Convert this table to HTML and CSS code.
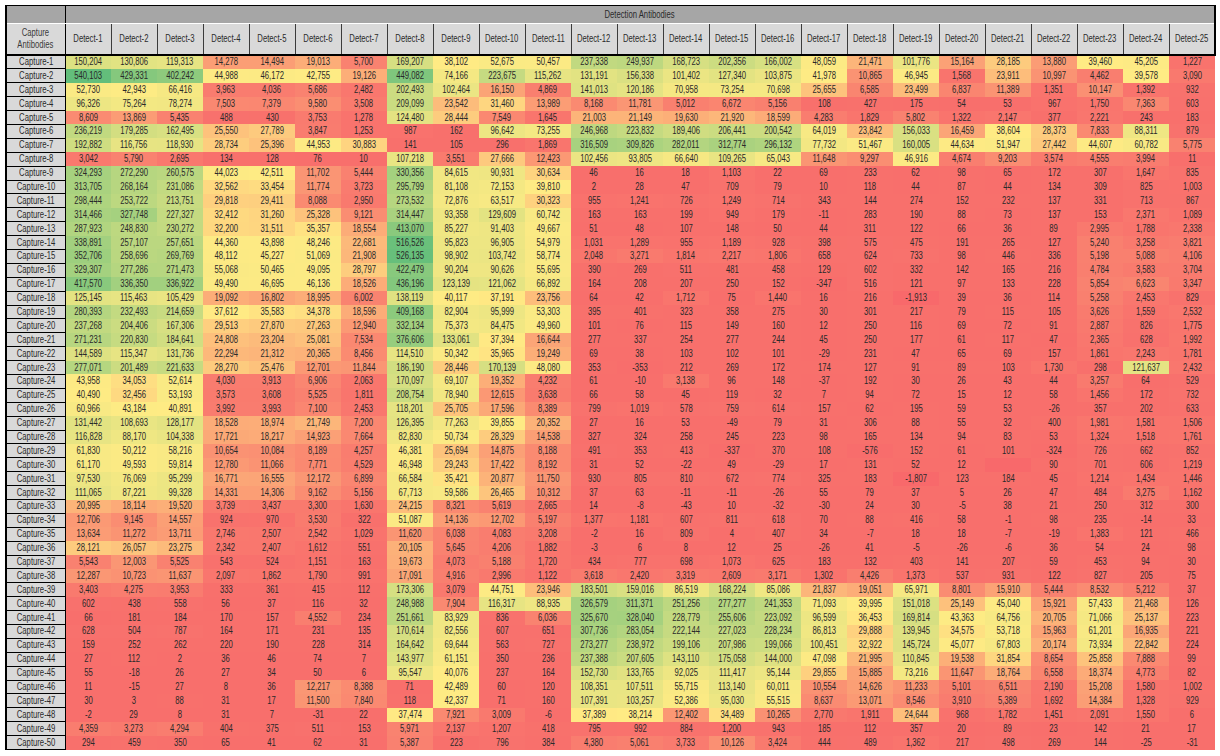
FILE: index.html
```html
<!DOCTYPE html>
<html lang="en">
<head>
<meta charset="utf-8">
<title>Capture / Detection Antibody Matrix</title>
<link rel="stylesheet" href="styles.css">
</head>
<body>
<div class="sheet">
<table class="grid">
<colgroup><col class="c-label"><col class="c-data" span="25"></colgroup>
<thead>
<tr class="band"><th class="corner"></th><th class="band-title" colspan="25">Detection Antibodies</th></tr>
<tr class="heads"><th class="label-head">Capture<br>Antibodies</th><th>Detect-1</th><th>Detect-2</th><th>Detect-3</th><th>Detect-4</th><th>Detect-5</th><th>Detect-6</th><th>Detect-7</th><th>Detect-8</th><th>Detect-9</th><th>Detect-10</th><th>Detect-11</th><th>Detect-12</th><th>Detect-13</th><th>Detect-14</th><th>Detect-15</th><th>Detect-16</th><th>Detect-17</th><th>Detect-18</th><th>Detect-19</th><th>Detect-20</th><th>Detect-21</th><th>Detect-22</th><th>Detect-23</th><th>Detect-24</th><th>Detect-25</th></tr>
</thead>
<tbody>
<tr><th>Capture-1</th><td>150,204</td><td>130,806</td><td>119,313</td><td>14,278</td><td>14,494</td><td>19,013</td><td>5,700</td><td>169,207</td><td>38,102</td><td>52,675</td><td>50,457</td><td>237,338</td><td>249,937</td><td>168,723</td><td>202,356</td><td>166,002</td><td>48,059</td><td>21,471</td><td>101,776</td><td>15,164</td><td>28,185</td><td>13,880</td><td>39,460</td><td>45,205</td><td>1,227</td></tr>
<tr><th>Capture-2</th><td>540,103</td><td>429,331</td><td>402,242</td><td>44,988</td><td>46,172</td><td>42,755</td><td>19,126</td><td>449,082</td><td>74,166</td><td>223,675</td><td>115,262</td><td>131,191</td><td>156,338</td><td>101,402</td><td>127,340</td><td>103,875</td><td>41,978</td><td>10,865</td><td>46,945</td><td>1,568</td><td>23,911</td><td>10,997</td><td>4,462</td><td>39,578</td><td>3,090</td></tr>
<tr><th>Capture-3</th><td>52,730</td><td>42,943</td><td>66,416</td><td>3,963</td><td>4,036</td><td>5,686</td><td>2,482</td><td>202,493</td><td>102,464</td><td>16,150</td><td>4,869</td><td>141,013</td><td>120,186</td><td>70,958</td><td>73,254</td><td>70,698</td><td>25,655</td><td>6,585</td><td>23,499</td><td>6,837</td><td>11,389</td><td>1,351</td><td>10,147</td><td>1,392</td><td>932</td></tr>
<tr><th>Capture-4</th><td>96,326</td><td>75,264</td><td>78,274</td><td>7,503</td><td>7,379</td><td>9,580</td><td>3,508</td><td>209,099</td><td>23,542</td><td>31,460</td><td>13,989</td><td>8,168</td><td>11,781</td><td>5,012</td><td>6,672</td><td>5,156</td><td>108</td><td>427</td><td>175</td><td>54</td><td>53</td><td>967</td><td>1,750</td><td>7,363</td><td>603</td></tr>
<tr><th>Capture-5</th><td>8,609</td><td>13,869</td><td>5,435</td><td>488</td><td>430</td><td>3,753</td><td>1,278</td><td>124,480</td><td>28,444</td><td>7,549</td><td>1,645</td><td>21,003</td><td>21,149</td><td>19,630</td><td>21,920</td><td>18,599</td><td>4,283</td><td>1,829</td><td>5,802</td><td>1,322</td><td>2,147</td><td>377</td><td>2,221</td><td>243</td><td>183</td></tr>
<tr><th>Capture-6</th><td>236,219</td><td>179,285</td><td>162,495</td><td>25,550</td><td>27,789</td><td>3,847</td><td>1,253</td><td>987</td><td>162</td><td>96,642</td><td>73,255</td><td>246,968</td><td>223,832</td><td>189,406</td><td>206,441</td><td>200,542</td><td>64,019</td><td>23,842</td><td>156,033</td><td>16,459</td><td>38,604</td><td>28,373</td><td>7,833</td><td>88,311</td><td>879</td></tr>
<tr><th>Capture-7</th><td>192,882</td><td>116,756</td><td>118,930</td><td>28,734</td><td>25,396</td><td>44,953</td><td>30,883</td><td>141</td><td>105</td><td>296</td><td>1,869</td><td>316,509</td><td>309,826</td><td>282,011</td><td>312,774</td><td>296,132</td><td>77,732</td><td>51,467</td><td>160,005</td><td>44,634</td><td>51,947</td><td>27,442</td><td>44,607</td><td>60,782</td><td>5,775</td></tr>
<tr><th>Capture-8</th><td>3,042</td><td>5,790</td><td>2,695</td><td>134</td><td>128</td><td>76</td><td>10</td><td>107,218</td><td>3,551</td><td>27,666</td><td>12,423</td><td>102,456</td><td>93,805</td><td>66,640</td><td>109,265</td><td>65,043</td><td>11,648</td><td>9,297</td><td>46,916</td><td>4,674</td><td>9,203</td><td>3,574</td><td>4,555</td><td>3,994</td><td>11</td></tr>
<tr><th>Capture-9</th><td>324,293</td><td>272,290</td><td>260,575</td><td>44,023</td><td>42,511</td><td>11,702</td><td>5,444</td><td>330,356</td><td>84,615</td><td>90,931</td><td>30,634</td><td>46</td><td>16</td><td>18</td><td>1,103</td><td>22</td><td>69</td><td>233</td><td>62</td><td>98</td><td>65</td><td>172</td><td>307</td><td>1,647</td><td>835</td></tr>
<tr><th>Capture-10</th><td>313,705</td><td>268,164</td><td>231,086</td><td>32,562</td><td>33,454</td><td>11,774</td><td>3,723</td><td>295,799</td><td>81,108</td><td>72,153</td><td>39,810</td><td>2</td><td>28</td><td>47</td><td>709</td><td>79</td><td>10</td><td>118</td><td>44</td><td>87</td><td>44</td><td>134</td><td>309</td><td>825</td><td>1,003</td></tr>
<tr><th>Capture-11</th><td>298,444</td><td>253,722</td><td>213,751</td><td>29,818</td><td>29,411</td><td>8,088</td><td>2,950</td><td>273,532</td><td>72,876</td><td>63,517</td><td>30,323</td><td>955</td><td>1,241</td><td>726</td><td>1,249</td><td>714</td><td>343</td><td>144</td><td>274</td><td>152</td><td>232</td><td>137</td><td>331</td><td>713</td><td>867</td></tr>
<tr><th>Capture-12</th><td>314,466</td><td>327,748</td><td>227,327</td><td>32,412</td><td>31,260</td><td>25,328</td><td>9,121</td><td>314,447</td><td>93,358</td><td>129,609</td><td>60,742</td><td>163</td><td>163</td><td>199</td><td>949</td><td>179</td><td>-11</td><td>283</td><td>190</td><td>88</td><td>73</td><td>137</td><td>153</td><td>2,371</td><td>1,089</td></tr>
<tr><th>Capture-13</th><td>287,923</td><td>248,830</td><td>230,272</td><td>32,200</td><td>31,511</td><td>35,357</td><td>18,554</td><td>413,070</td><td>85,227</td><td>91,403</td><td>49,667</td><td>51</td><td>48</td><td>107</td><td>148</td><td>50</td><td>44</td><td>311</td><td>122</td><td>66</td><td>36</td><td>89</td><td>2,995</td><td>1,788</td><td>2,338</td></tr>
<tr><th>Capture-14</th><td>338,891</td><td>257,107</td><td>257,651</td><td>44,360</td><td>43,898</td><td>48,246</td><td>22,681</td><td>516,526</td><td>95,823</td><td>96,905</td><td>54,979</td><td>1,031</td><td>1,289</td><td>955</td><td>1,189</td><td>928</td><td>398</td><td>575</td><td>475</td><td>191</td><td>265</td><td>127</td><td>5,240</td><td>3,258</td><td>3,821</td></tr>
<tr><th>Capture-15</th><td>352,706</td><td>258,696</td><td>269,769</td><td>48,112</td><td>45,227</td><td>51,069</td><td>21,908</td><td>526,135</td><td>98,902</td><td>103,742</td><td>58,774</td><td>2,048</td><td>3,271</td><td>1,814</td><td>2,217</td><td>1,806</td><td>658</td><td>624</td><td>733</td><td>98</td><td>446</td><td>336</td><td>5,198</td><td>5,088</td><td>4,106</td></tr>
<tr><th>Capture-16</th><td>329,307</td><td>277,286</td><td>271,473</td><td>55,068</td><td>50,465</td><td>49,095</td><td>28,797</td><td>422,479</td><td>90,204</td><td>90,626</td><td>55,695</td><td>390</td><td>269</td><td>511</td><td>481</td><td>458</td><td>129</td><td>602</td><td>332</td><td>142</td><td>165</td><td>216</td><td>4,784</td><td>3,583</td><td>3,704</td></tr>
<tr><th>Capture-17</th><td>417,570</td><td>336,350</td><td>336,922</td><td>49,490</td><td>46,695</td><td>46,136</td><td>18,526</td><td>436,196</td><td>123,139</td><td>121,062</td><td>66,892</td><td>164</td><td>208</td><td>207</td><td>250</td><td>152</td><td>-347</td><td>516</td><td>121</td><td>97</td><td>133</td><td>228</td><td>5,854</td><td>6,623</td><td>3,347</td></tr>
<tr><th>Capture-18</th><td>125,145</td><td>115,463</td><td>105,429</td><td>19,092</td><td>16,802</td><td>18,995</td><td>6,002</td><td>138,119</td><td>40,117</td><td>37,191</td><td>23,756</td><td>64</td><td>42</td><td>1,712</td><td>75</td><td>1,440</td><td>16</td><td>216</td><td>-1,913</td><td>39</td><td>36</td><td>114</td><td>5,258</td><td>2,453</td><td>829</td></tr>
<tr><th>Capture-19</th><td>280,393</td><td>232,493</td><td>214,659</td><td>37,612</td><td>35,583</td><td>34,378</td><td>18,596</td><td>409,168</td><td>82,904</td><td>95,999</td><td>53,303</td><td>395</td><td>401</td><td>323</td><td>358</td><td>275</td><td>30</td><td>301</td><td>217</td><td>79</td><td>115</td><td>105</td><td>3,626</td><td>1,559</td><td>2,532</td></tr>
<tr><th>Capture-20</th><td>237,268</td><td>204,406</td><td>167,306</td><td>29,513</td><td>27,870</td><td>27,263</td><td>12,940</td><td>332,134</td><td>75,373</td><td>84,475</td><td>49,960</td><td>101</td><td>76</td><td>115</td><td>149</td><td>160</td><td>12</td><td>250</td><td>116</td><td>69</td><td>72</td><td>91</td><td>2,887</td><td>826</td><td>1,775</td></tr>
<tr><th>Capture-21</th><td>271,231</td><td>220,830</td><td>184,641</td><td>24,808</td><td>23,204</td><td>25,081</td><td>7,534</td><td>376,606</td><td>133,061</td><td>37,394</td><td>16,644</td><td>277</td><td>337</td><td>254</td><td>277</td><td>244</td><td>45</td><td>250</td><td>177</td><td>61</td><td>117</td><td>47</td><td>2,365</td><td>628</td><td>1,992</td></tr>
<tr><th>Capture-22</th><td>144,589</td><td>115,347</td><td>131,736</td><td>22,294</td><td>21,312</td><td>20,365</td><td>8,456</td><td>114,510</td><td>50,342</td><td>35,965</td><td>19,249</td><td>69</td><td>38</td><td>103</td><td>102</td><td>101</td><td>-29</td><td>231</td><td>47</td><td>65</td><td>69</td><td>157</td><td>1,861</td><td>2,243</td><td>1,781</td></tr>
<tr><th>Capture-23</th><td>277,071</td><td>201,489</td><td>221,633</td><td>28,270</td><td>25,476</td><td>12,701</td><td>11,844</td><td>186,190</td><td>28,446</td><td>170,139</td><td>48,080</td><td>353</td><td>-353</td><td>212</td><td>269</td><td>172</td><td>174</td><td>127</td><td>91</td><td>89</td><td>103</td><td>1,730</td><td>298</td><td>121,637</td><td>2,432</td></tr>
<tr><th>Capture-24</th><td>43,958</td><td>34,053</td><td>52,614</td><td>4,030</td><td>3,913</td><td>6,906</td><td>2,063</td><td>170,097</td><td>69,107</td><td>19,352</td><td>4,232</td><td>61</td><td>-10</td><td>3,138</td><td>96</td><td>148</td><td>-37</td><td>192</td><td>30</td><td>26</td><td>43</td><td>44</td><td>3,257</td><td>64</td><td>529</td></tr>
<tr><th>Capture-25</th><td>40,490</td><td>32,456</td><td>53,193</td><td>3,573</td><td>3,608</td><td>5,525</td><td>1,811</td><td>208,754</td><td>78,940</td><td>12,615</td><td>3,638</td><td>66</td><td>58</td><td>45</td><td>119</td><td>32</td><td>7</td><td>94</td><td>72</td><td>15</td><td>12</td><td>58</td><td>1,456</td><td>172</td><td>732</td></tr>
<tr><th>Capture-26</th><td>60,966</td><td>43,184</td><td>40,891</td><td>3,992</td><td>3,993</td><td>7,100</td><td>2,453</td><td>118,201</td><td>25,705</td><td>17,596</td><td>8,389</td><td>799</td><td>1,019</td><td>578</td><td>759</td><td>614</td><td>157</td><td>62</td><td>195</td><td>59</td><td>53</td><td>-26</td><td>357</td><td>202</td><td>633</td></tr>
<tr><th>Capture-27</th><td>131,442</td><td>108,693</td><td>128,177</td><td>18,528</td><td>18,974</td><td>21,749</td><td>7,200</td><td>126,395</td><td>77,263</td><td>39,855</td><td>20,352</td><td>27</td><td>16</td><td>53</td><td>-49</td><td>79</td><td>31</td><td>306</td><td>88</td><td>55</td><td>32</td><td>400</td><td>1,981</td><td>1,581</td><td>1,506</td></tr>
<tr><th>Capture-28</th><td>116,828</td><td>88,170</td><td>104,338</td><td>17,721</td><td>18,217</td><td>14,923</td><td>7,664</td><td>82,830</td><td>50,734</td><td>28,329</td><td>14,538</td><td>327</td><td>324</td><td>258</td><td>245</td><td>223</td><td>98</td><td>165</td><td>134</td><td>94</td><td>83</td><td>53</td><td>1,324</td><td>1,518</td><td>1,761</td></tr>
<tr><th>Capture-29</th><td>61,830</td><td>50,212</td><td>58,216</td><td>10,654</td><td>10,084</td><td>8,189</td><td>4,257</td><td>46,381</td><td>25,694</td><td>14,875</td><td>8,188</td><td>491</td><td>353</td><td>413</td><td>-337</td><td>370</td><td>108</td><td>-576</td><td>152</td><td>61</td><td>101</td><td>-324</td><td>726</td><td>662</td><td>852</td></tr>
<tr><th>Capture-30</th><td>61,170</td><td>49,593</td><td>59,814</td><td>12,780</td><td>11,066</td><td>7,771</td><td>4,529</td><td>46,948</td><td>29,243</td><td>17,422</td><td>8,192</td><td>31</td><td>52</td><td>-22</td><td>49</td><td>-29</td><td>17</td><td>131</td><td>52</td><td>12</td><td></td><td>90</td><td>701</td><td>606</td><td>1,219</td></tr>
<tr><th>Capture-31</th><td>97,530</td><td>76,069</td><td>95,299</td><td>16,771</td><td>16,555</td><td>12,172</td><td>6,899</td><td>66,584</td><td>35,421</td><td>20,877</td><td>11,750</td><td>930</td><td>805</td><td>810</td><td>672</td><td>774</td><td>325</td><td>183</td><td>-1,807</td><td>123</td><td>184</td><td>45</td><td>1,214</td><td>1,434</td><td>1,446</td></tr>
<tr><th>Capture-32</th><td>111,065</td><td>87,221</td><td>99,328</td><td>14,331</td><td>14,306</td><td>9,162</td><td>5,156</td><td>67,713</td><td>59,586</td><td>26,465</td><td>10,312</td><td>37</td><td>63</td><td>-11</td><td>-11</td><td>-26</td><td>55</td><td>79</td><td>37</td><td>5</td><td>26</td><td>47</td><td>484</td><td>3,275</td><td>1,162</td></tr>
<tr><th>Capture-33</th><td>20,995</td><td>18,114</td><td>19,520</td><td>3,739</td><td>3,437</td><td>3,300</td><td>1,630</td><td>24,215</td><td>8,321</td><td>5,619</td><td>2,665</td><td>14</td><td>-8</td><td>-43</td><td>10</td><td>-32</td><td>-30</td><td>24</td><td>30</td><td>-5</td><td>38</td><td>21</td><td>250</td><td>312</td><td>300</td></tr>
<tr><th>Capture-34</th><td>12,706</td><td>9,145</td><td>14,557</td><td>924</td><td>970</td><td>3,530</td><td>322</td><td>51,087</td><td>14,136</td><td>12,702</td><td>5,197</td><td>1,377</td><td>1,181</td><td>607</td><td>811</td><td>618</td><td>70</td><td>88</td><td>416</td><td>58</td><td>-1</td><td>98</td><td>235</td><td>-14</td><td>33</td></tr>
<tr><th>Capture-35</th><td>13,634</td><td>11,272</td><td>13,711</td><td>2,746</td><td>2,507</td><td>2,542</td><td>1,029</td><td>11,620</td><td>6,038</td><td>4,083</td><td>3,208</td><td>-2</td><td>16</td><td>809</td><td>4</td><td>407</td><td>34</td><td>-7</td><td>18</td><td>18</td><td>-7</td><td>-19</td><td>1,383</td><td>121</td><td>466</td></tr>
<tr><th>Capture-36</th><td>28,121</td><td>26,057</td><td>23,275</td><td>2,342</td><td>2,407</td><td>1,612</td><td>551</td><td>20,105</td><td>5,645</td><td>4,206</td><td>1,882</td><td>-3</td><td>6</td><td>8</td><td>12</td><td>25</td><td>-26</td><td>41</td><td>-5</td><td>-26</td><td>-6</td><td>36</td><td>54</td><td>24</td><td>98</td></tr>
<tr><th>Capture-37</th><td>5,543</td><td>12,003</td><td>5,525</td><td>543</td><td>524</td><td>1,151</td><td>163</td><td>19,673</td><td>4,073</td><td>5,188</td><td>1,720</td><td>434</td><td>777</td><td>698</td><td>1,073</td><td>625</td><td>183</td><td>132</td><td>403</td><td>141</td><td>207</td><td>59</td><td>453</td><td>94</td><td>30</td></tr>
<tr><th>Capture-38</th><td>12,287</td><td>10,723</td><td>11,637</td><td>2,097</td><td>1,862</td><td>1,790</td><td>991</td><td>17,091</td><td>4,916</td><td>2,996</td><td>1,122</td><td>3,618</td><td>2,420</td><td>3,319</td><td>2,609</td><td>3,171</td><td>1,302</td><td>4,426</td><td>1,373</td><td>537</td><td>931</td><td>122</td><td>827</td><td>205</td><td>75</td></tr>
<tr><th>Capture-39</th><td>3,403</td><td>4,275</td><td>3,953</td><td>333</td><td>361</td><td>415</td><td>112</td><td>173,306</td><td>3,079</td><td>44,751</td><td>23,946</td><td>183,501</td><td>159,016</td><td>86,519</td><td>168,224</td><td>85,086</td><td>21,837</td><td>19,051</td><td>65,971</td><td>8,801</td><td>15,910</td><td>5,444</td><td>8,532</td><td>5,212</td><td>37</td></tr>
<tr><th>Capture-40</th><td>602</td><td>438</td><td>558</td><td>56</td><td>37</td><td>116</td><td>32</td><td>248,988</td><td>7,904</td><td>116,317</td><td>88,935</td><td>326,579</td><td>311,371</td><td>251,256</td><td>277,277</td><td>241,353</td><td>71,093</td><td>39,995</td><td>151,018</td><td>25,149</td><td>45,040</td><td>15,921</td><td>57,433</td><td>21,468</td><td>126</td></tr>
<tr><th>Capture-41</th><td>66</td><td>181</td><td>184</td><td>170</td><td>157</td><td>4,552</td><td>234</td><td>251,661</td><td>83,929</td><td>836</td><td>6,036</td><td>325,670</td><td>328,040</td><td>228,779</td><td>255,606</td><td>223,092</td><td>96,599</td><td>36,453</td><td>169,814</td><td>43,363</td><td>64,756</td><td>20,705</td><td>71,066</td><td>25,137</td><td>223</td></tr>
<tr><th>Capture-42</th><td>628</td><td>504</td><td>787</td><td>164</td><td>171</td><td>231</td><td>135</td><td>170,614</td><td>82,556</td><td>607</td><td>651</td><td>307,736</td><td>283,054</td><td>222,144</td><td>227,023</td><td>228,234</td><td>86,813</td><td>29,888</td><td>139,945</td><td>34,575</td><td>53,718</td><td>15,963</td><td>61,201</td><td>16,935</td><td>221</td></tr>
<tr><th>Capture-43</th><td>159</td><td>252</td><td>262</td><td>220</td><td>190</td><td>228</td><td>314</td><td>164,642</td><td>69,644</td><td>563</td><td>727</td><td>273,277</td><td>238,972</td><td>199,106</td><td>207,986</td><td>199,066</td><td>100,451</td><td>32,922</td><td>145,724</td><td>45,077</td><td>67,803</td><td>20,174</td><td>73,934</td><td>22,842</td><td>224</td></tr>
<tr><th>Capture-44</th><td>27</td><td>112</td><td>2</td><td>36</td><td>46</td><td>74</td><td>7</td><td>143,977</td><td>61,151</td><td>350</td><td>236</td><td>237,388</td><td>207,605</td><td>143,110</td><td>175,058</td><td>144,000</td><td>47,098</td><td>21,995</td><td>110,845</td><td>19,538</td><td>31,854</td><td>8,654</td><td>25,858</td><td>7,888</td><td>99</td></tr>
<tr><th>Capture-45</th><td>55</td><td>-18</td><td>26</td><td>27</td><td>34</td><td>50</td><td>6</td><td>95,547</td><td>40,076</td><td>237</td><td>164</td><td>152,730</td><td>133,765</td><td>92,025</td><td>111,417</td><td>95,144</td><td>29,855</td><td>15,885</td><td>73,216</td><td>11,647</td><td>18,764</td><td>6,558</td><td>18,374</td><td>4,773</td><td>82</td></tr>
<tr><th>Capture-46</th><td>11</td><td>-15</td><td>27</td><td>8</td><td>36</td><td>12,217</td><td>8,388</td><td>71</td><td>42,489</td><td>60</td><td>120</td><td>108,351</td><td>107,511</td><td>55,715</td><td>113,140</td><td>60,011</td><td>10,554</td><td>14,626</td><td>11,233</td><td>5,101</td><td>6,511</td><td>2,190</td><td>15,208</td><td>1,580</td><td>1,002</td></tr>
<tr><th>Capture-47</th><td>30</td><td>3</td><td>88</td><td>31</td><td>17</td><td>11,500</td><td>7,840</td><td>118</td><td>42,337</td><td>71</td><td>160</td><td>107,391</td><td>103,257</td><td>52,386</td><td>95,030</td><td>55,515</td><td>8,637</td><td>13,071</td><td>8,546</td><td>3,910</td><td>5,389</td><td>1,692</td><td>14,384</td><td>1,328</td><td>929</td></tr>
<tr><th>Capture-48</th><td>-2</td><td>29</td><td>8</td><td>31</td><td>7</td><td>-31</td><td>22</td><td>37,474</td><td>7,921</td><td>3,009</td><td>-6</td><td>37,389</td><td>38,214</td><td>12,402</td><td>34,489</td><td>10,265</td><td>2,770</td><td>1,911</td><td>24,644</td><td>968</td><td>1,782</td><td>1,451</td><td>2,091</td><td>1,550</td><td>6</td></tr>
<tr><th>Capture-49</th><td>4,359</td><td>3,273</td><td>4,294</td><td>404</td><td>375</td><td>511</td><td>153</td><td>5,971</td><td>2,137</td><td>1,207</td><td>418</td><td>795</td><td>992</td><td>884</td><td>1,200</td><td>943</td><td>185</td><td>112</td><td>357</td><td>20</td><td>89</td><td>23</td><td>142</td><td>21</td><td>17</td></tr>
<tr><th>Capture-50</th><td>294</td><td>459</td><td>350</td><td>65</td><td>41</td><td>62</td><td>31</td><td>5,387</td><td>223</td><td>796</td><td>384</td><td>4,380</td><td>5,061</td><td>3,733</td><td>10,126</td><td>3,424</td><td>444</td><td>489</td><td>1,362</td><td>217</td><td>498</td><td>269</td><td>144</td><td>-25</td><td>-31</td></tr>
</tbody>
</table>
</div>
<script src="script.js"></script>
</body>
</html>
```

FILE: styles.css
```css
html, body {
  margin: 0;
  background: #ffffff;
}

body {
  font-family: "Liberation Sans", Arial, sans-serif;
}

.sheet {
  padding: 5px 0 0 5px;
}

.grid {
  border-collapse: collapse;
  table-layout: fixed;
  width: 1211px;
  font-size: 10px;
  color: #2a2a2a;
}

.c-label {
  width: 59px;
}

.c-data {
  width: 46px;
}

.narrow {
  display: inline-block;
  transform: scaleX(0.77);
  transform-origin: 50% 50%;
  white-space: nowrap;
}

.band th {
  height: 17px;
  padding: 0;
  background: #a6a6a6;
  border-top: 1px solid #000;
  border-bottom: 1px solid #ffffff;
  font-weight: normal;
  font-size: 10px;
  color: #2a2a2a;
  vertical-align: middle;
}

.band .corner {
  border-left: 2px solid #000;
  border-right: 1px solid #000;
}

.band .band-title {
  border-right: 2px solid #000;
}

.heads th {
  height: 30px;
  padding: 0;
  background: #d9d9d9;
  border-left: 1px solid #3c3c3c;
  border-right: 1px solid #3c3c3c;
  border-bottom: 2px solid #000;
  font-weight: normal;
  line-height: 12px;
  vertical-align: middle;
}

.heads .label-head {
  border-left: 2px solid #000;
  border-right: 1px solid #000;
  color: #3a3a3a;
}

.heads th:last-child {
  border-right: 2px solid #000;
}

tbody tr {
  height: 13.9px;
}

tbody th {
  padding: 0;
  background: #d9d9d9;
  border-top: 1px solid #000;
  border-bottom: 1px solid #000;
  border-left: 2px solid #000;
  border-right: 1px solid #000;
  font-weight: normal;
  line-height: 12px;
  white-space: nowrap;
}

tbody td {
  padding: 0;
  text-align: center;
  line-height: 12px;
  white-space: nowrap;
  background: #f8696b;
}
```

FILE: script.js
```js
(function () {
  var grid = document.querySelector('.grid');
  var cells = grid.querySelectorAll('tbody td');
  var values = [];
  cells.forEach(function (td) {
    var t = td.textContent.replace(/,/g, '').trim();
    values.push(t === '' ? null : parseFloat(t));
  });
  var nums = values.filter(function (v) { return v !== null; });
  var min = Math.min.apply(null, nums);
  var max = Math.max.apply(null, nums);
  var mid = 38000;
  var RED = [248, 105, 107], YEL = [255, 235, 132], GRN = [99, 190, 123];
  function mix(a, b, t) {
    return [0, 1, 2].map(function (i) { return Math.round(a[i] + (b[i] - a[i]) * t); });
  }
  cells.forEach(function (td, i) {
    var v = values[i];
    if (v === null) v = min;
    var c;
    if (v <= mid) {
      c = mix(RED, YEL, (v - min) / (mid - min));
    } else {
      c = mix(YEL, GRN, (v - mid) / (max - mid));
    }
    td.style.backgroundColor = 'rgb(' + c.join(',') + ')';
  });
  grid.querySelectorAll('th, td').forEach(function (cell) {
    if (cell.innerHTML.trim() === '') return;
    var span = document.createElement('span');
    span.className = 'narrow';
    while (cell.firstChild) span.appendChild(cell.firstChild);
    cell.appendChild(span);
  });
})();
```
